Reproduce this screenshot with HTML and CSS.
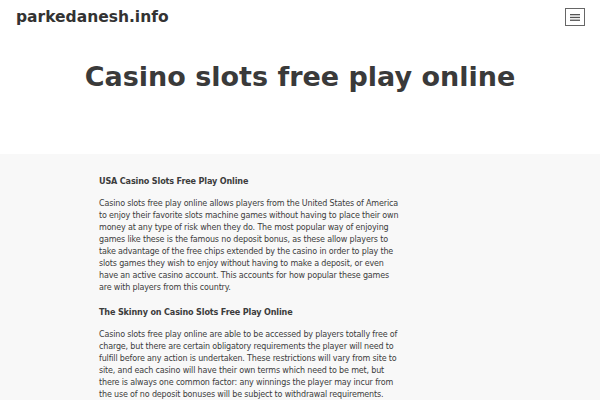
FILE: index.html
```html
<!DOCTYPE html>
<html lang="en">
<head>
<meta charset="utf-8">
<title>Casino slots free play online</title>
<link rel="stylesheet" href="styles.css">
</head>
<body>
<header class="site-header">
  <div class="site-title">parkedanesh.info</div>
  <button class="menu-toggle" aria-label="Menu">
    <svg width="10" height="7" viewBox="0 0 10 7"><rect x="0" y="0" width="10" height="1.3" fill="#555"/><rect x="0" y="2.8" width="10" height="1.3" fill="#555"/><rect x="0" y="5.6" width="10" height="1.3" fill="#555"/></svg>
  </button>
</header>
<section class="hero">
  <h1 class="page-title">Casino slots free play online</h1>
</section>
<main class="content">
  <article class="entry">
    <h2 class="entry-heading">USA Casino Slots Free Play Online</h2>
    <p>Casino slots free play online allows players from the United States of America to enjoy their favorite slots machine games without having to place their own money at any type of risk when they do. The most popular way of enjoying games like these is the famous no deposit bonus, as these allow players to take advantage of the free chips extended by the casino in order to play the slots games they wish to enjoy without having to make a deposit, or even have an active casino account. This accounts for how popular these games are with players from this country.</p>
    <h2 class="entry-heading">The Skinny on Casino Slots Free Play Online</h2>
    <p>Casino slots free play online are able to be accessed by players totally free of charge, but there are certain obligatory requirements the player will need to fulfill before any action is undertaken. These restrictions will vary from site to site, and each casino will have their own terms which need to be met, but there is always one common factor: any winnings the player may incur from the use of no deposit bonuses will be subject to withdrawal requirements.</p>
  </article>
</main>
</body>
</html>
```
FILE: styles.css
```css
html, body {
  margin: 0;
  padding: 0;
  background: #ffffff;
  font-family: "DejaVu Sans", Verdana, sans-serif;
  color: #333333;
}
.site-header {
  display: flex;
  justify-content: space-between;
  align-items: center;
  height: 34px;
  padding: 0 15px 0 16px;
}
.site-title {
  font-size: 15.5px;
  font-weight: bold;
  color: #333;
}
.menu-toggle {
  width: 20px;
  height: 18px;
  padding: 0;
  margin: 0;
  border: 1px solid #666;
  background: #fff;
  display: flex;
  align-items: center;
  justify-content: center;
}
.hero {
  height: 120px;
  display: flex;
  justify-content: center;
  align-items: flex-start;
}
.page-title {
  margin: 25px 0 0;
  font-size: 27px;
  line-height: 36px;
  font-weight: bold;
  color: #3a3a3a;
}
.content {
  background: #f8f8f8;
  padding: 21px 0 20px;
}
.entry {
  width: 300px;
  margin-left: 99px;
  font-size: 8px;
  letter-spacing: -0.16px;
  line-height: 12px;
  color: #3c3c3c;
}
.entry-heading {
  font-size: 8.1px;
  line-height: 12px;
  font-weight: bold;
  margin: 0 0 11px;
}
.entry p {
  margin: 0 0 12px;
}
```
